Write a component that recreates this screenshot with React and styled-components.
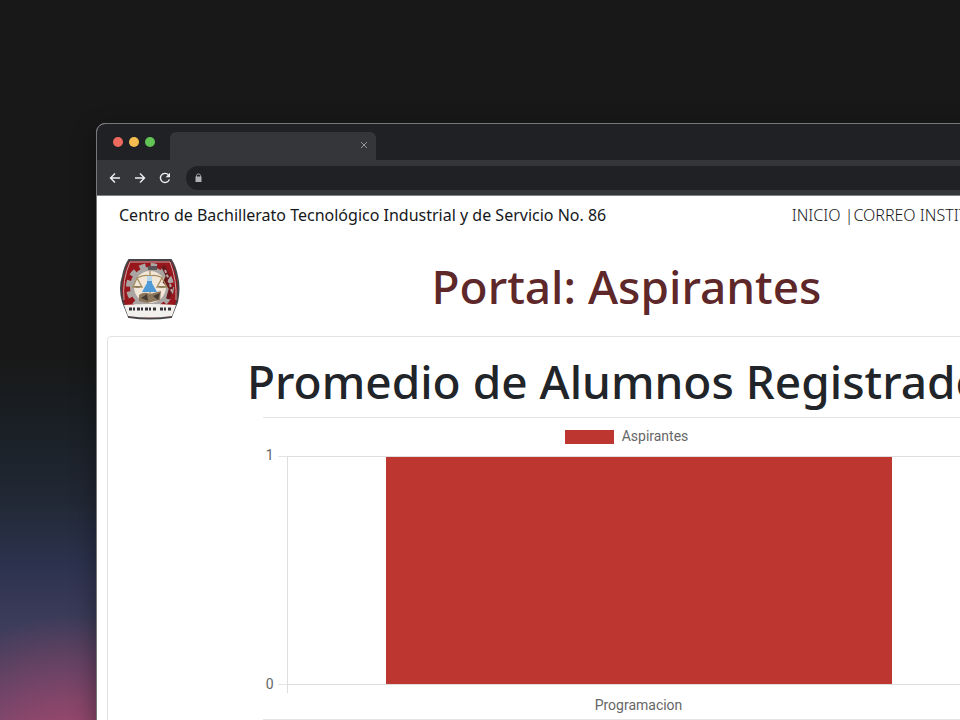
import React from "react";
import styled, { createGlobalStyle } from "styled-components";

const Global = createGlobalStyle`
  *, *::before, *::after { box-sizing: border-box; }
  body { margin: 0; background: #181818; }
  h1, h2, p { margin: 0; }
`;

const Desktop = styled.div`
  min-height: 100vh;
  overflow: hidden;
  padding-top: 123px;
  background:
    radial-gradient(ellipse 150px 150px at 70px 103%, rgba(190, 72, 108, 0.75), transparent),
    linear-gradient(180deg, #181818 0, #181818 48%, #1a2026 58%, #222936 68%, #2c324e 76%, #3c3c5a 84%, #504264 92%, #6c4870 100%);
`;

const BrowserWindow = styled.div`
  margin: 0 -197px -40px 96px;
  min-height: calc(100vh - 83px);
  background: #fff;
  border: 1px solid #77787a;
  border-radius: 9px 9px 0 0;
  overflow: hidden;
  box-shadow: 0 8px 24px rgba(0, 0, 0, 0.4);
`;

const TabStrip = styled.div`
  display: flex;
  align-items: flex-end;
  gap: 15px;
  height: 36px;
  padding-left: 16px;
  background: #202124;
`;

const Lights = styled.div`
  display: flex;
  align-items: center;
  gap: 6px;
  height: 36px;
`;

const Light = styled.span`
  width: 10px;
  height: 10px;
  border-radius: 50%;
  background: ${(p) => p.$color};
`;

const Tab = styled.div`
  display: flex;
  align-items: center;
  justify-content: flex-end;
  width: 206px;
  height: 28px;
  padding: 0 4px 2px 0;
  border-radius: 6px 6px 0 0;
  background: #35363a;
`;

const IconButton = styled.button`
  display: flex;
  align-items: center;
  justify-content: center;
  width: 16px;
  height: 16px;
  padding: 0;
  border: 0;
  background: none;
  color: ${(p) => (p.$muted ? "#96979a" : "#f1f1f2")};
`;

const Toolbar = styled.div`
  display: flex;
  align-items: center;
  gap: 9px;
  height: 36px;
  padding-left: 10px;
  background: #35363a;
  border-bottom: 1px solid #808184;
`;

const AddressBar = styled.label`
  display: flex;
  align-items: center;
  flex: 1;
  gap: 8px;
  height: 24px;
  margin-left: 4px;
  padding-left: 9px;
  border-radius: 12px;
  background: #202124;
`;

const AddressInput = styled.input`
  flex: 1;
  height: 20px;
  border: 0;
  outline: 0;
  background: none;
  color: #e8e8e8;
  font: 12px Roboto, sans-serif;
`;

const TopBar = styled.header`
  display: grid;
  grid-template-columns: 2fr 1fr;
  padding: 7px 28px 1px 22px;
  color: #16181b;
  font: 16px/24px "Noto Sans", sans-serif;
  white-space: nowrap;
`;

const Nav = styled.nav`
  font-weight: 300;
`;

const NavLink = styled.a`
  color: inherit;
  text-decoration: none;
`;

const Masthead = styled.div`
  display: grid;
  grid-template-columns: 64px 1fr 64px;
  align-items: center;
  padding: 26px 22px 14px;
`;

const PageTitle = styled.h1`
  padding-bottom: 6px;
  color: #5e2729;
  font: 500 46px/64px "Noto Sans", sans-serif;
  text-align: center;
`;

const Card = styled.main`
  display: flex;
  flex-direction: column;
  align-items: center;
  margin: -2px 10px 0;
  padding: 12px 20px 60px;
  border: 1px solid #e2e2e2;
  border-radius: 4px;
`;

const ChartTitle = styled.h2`
  color: #212529;
  font: 500 46px/64px "Noto Sans", sans-serif;
  white-space: nowrap;
`;

const Figure = styled.figure`
  width: 73%;
  margin: 4px 0 0;
  border-top: 1px solid #e4e4e4;
  border-bottom: 1px solid #e4e4e4;
  color: #666;
  font: 14px/16px Roboto, sans-serif;
`;

const Legend = styled.figcaption`
  display: flex;
  align-items: center;
  justify-content: center;
  gap: 8px;
  padding: 10px 0 12px;
`;

const Swatch = styled.span`
  width: 49px;
  height: 14px;
  margin-top: 2px;
  background: #bd3630;
`;

const Plot = styled.div`
  display: grid;
  grid-template-columns: 11px 13px 1fr;
`;

const Scale = styled.div`
  display: flex;
  flex-direction: column;
  justify-content: space-between;
  margin: -9px 0 -7px;
  text-align: right;
`;

const Ticks = styled.div`
  display: flex;
  justify-content: flex-end;

  &::before {
    content: "";
    width: 9px;
    border: solid #e4e4e4;
    border-width: 1px 0;
  }
`;

const BarArea = styled.div`
  height: 229px;
  padding: 0 14%;
  border: solid #dedede;
  border-width: 1px 0 1px 1px;
`;

const Bar = styled.div`
  height: 100%;
  background: #bd3630;
`;

const AxisTail = styled.div`
  grid-column: 3;
  height: 8px;
  border-left: 1px solid #dedede;
`;

const Category = styled.div`
  grid-column: 3;
  padding: 4px 0 6px;
  text-align: center;
`;

const Crest = () => (
  <svg width="62" height="62" viewBox="0 0 62 62" role="img" aria-label="CBTIS 86">
    <path d="M10 2H52Q56 8 58 18Q61 30 58 44L52 59Q31 62 10 59L4 44Q0 30 4 18Q6 8 10 2Z" fill="#98171d" stroke="#454547" strokeWidth="2" />
    <path d="M11 4H51Q58 22 57 42M11 4Q3 22 5 42" fill="none" stroke="#c9a6a6" strokeWidth="1" />
    <circle cx="31" cy="29" r="21" fill="none" stroke="#a9a6a4" strokeWidth="6" strokeDasharray="6 5" />
    <circle cx="31" cy="29" r="18" fill="#f1e6d8" stroke="#aaa5a2" strokeWidth="4" />
    <path d="M44 8L49 18L46 24L52 30L49 41" fill="none" stroke="#6b181c" strokeWidth="4" />
    <path d="M46 12L50 22L53 34" fill="none" stroke="#b9a9a4" strokeWidth="2" strokeDasharray="3 2" />
    <path d="M31 13V37M18 20Q25 16 31 18Q37 16 44 20M18 20L14 29H23ZM43 20L38 29H48Z" fill="none" stroke="#a58f60" strokeWidth="1.3" />
    <path d="M14 28Q18 32 23 28ZM38 28Q43 32 48 28Z" fill="#8f7e5c" />
    <path d="M28 20H33V25L38 34H23L28 25Z" fill="#4e9bd8" />
    <path d="M28 18H33V23H28Z" fill="#b7d6ea" />
    <path d="M20 37Q25 33 31 36L42 33L41 42L28 45L20 43Z" fill="#8c765c" />
    <path d="M22 40L28 36L29 43ZM34 38L41 35L39 42Z" fill="#463c33" />
    <path d="M29 8H38V12H29Z" fill="#5c5557" />
    <path d="M5 47Q31 45 57 47L53 58Q31 61 9 58Z" fill="#f1f0ed" />
    <path d="M10 51H37M41 51H52" fill="none" stroke="#343438" strokeWidth="3" strokeDasharray="3 1 2 2" />
  </svg>
);

const strokeProps = { fill: "none", stroke: "currentColor", strokeWidth: 1.4 };

export default function App() {
  return (
    <>
      <Global />
      <Desktop>
        <BrowserWindow>
          <TabStrip>
            <Lights>
              <Light $color="#ee6a5f" />
              <Light $color="#f5bd4f" />
              <Light $color="#61c454" />
            </Lights>
            <Tab>
              <IconButton $muted aria-label="Cerrar pestaña">
                <svg width="8" height="8" viewBox="0 0 8 8" {...strokeProps} strokeWidth="1"><path d="M1 1L7 7M7 1L1 7" /></svg>
              </IconButton>
            </Tab>
          </TabStrip>
          <Toolbar>
            <IconButton aria-label="Atrás">
              <svg width="12" height="12" viewBox="0 0 12 12" {...strokeProps}><path d="M11 6H1.5M6 1.5L1.5 6L6 10.5" /></svg>
            </IconButton>
            <IconButton aria-label="Adelante">
              <svg width="12" height="12" viewBox="0 0 12 12" {...strokeProps}><path d="M1 6H10.5M6 1.5L10.5 6L6 10.5" /></svg>
            </IconButton>
            <IconButton aria-label="Recargar">
              <svg width="12" height="12" viewBox="0 0 12 12" {...strokeProps}>
                <path d="M9.4 2.8A4.6 4.6 0 1 0 10.4 7.4" />
                <path d="M11 0.8V5.2H6.6Z" fill="currentColor" stroke="none" />
              </svg>
            </IconButton>
            <AddressBar>
              <svg width="7" height="10" viewBox="0 0 7 10" aria-hidden="true">
                <path d="M1.5 4V2.5Q1.5 1 3.5 1T5.5 2.5V4" fill="none" stroke="#a3a4a7" strokeWidth="1" />
                <path d="M0.5 3.5H6.5V9H0.5Z" fill="#b0b1b4" />
              </svg>
              <AddressInput aria-label="Dirección" />
            </AddressBar>
          </Toolbar>
          <TopBar>
            <p>Centro de Bachillerato Tecnológico Industrial y de Servicio No. 86</p>
            <Nav>
              <NavLink href="#inicio">INICIO</NavLink> |<NavLink href="#correo">CORREO INSTITUCIONAL</NavLink>
            </Nav>
          </TopBar>
          <Masthead>
            <Crest />
            <PageTitle>Portal: Aspirantes</PageTitle>
          </Masthead>
          <Card>
            <ChartTitle>Promedio de Alumnos Registrados</ChartTitle>
            <Figure>
              <Legend><Swatch />Aspirantes</Legend>
              <Plot>
                <Scale><span>1</span><span>0</span></Scale>
                <Ticks />
                <BarArea><Bar /></BarArea>
                <AxisTail />
                <Category>Programacion</Category>
              </Plot>
            </Figure>
          </Card>
        </BrowserWindow>
      </Desktop>
    </>
  );
}
